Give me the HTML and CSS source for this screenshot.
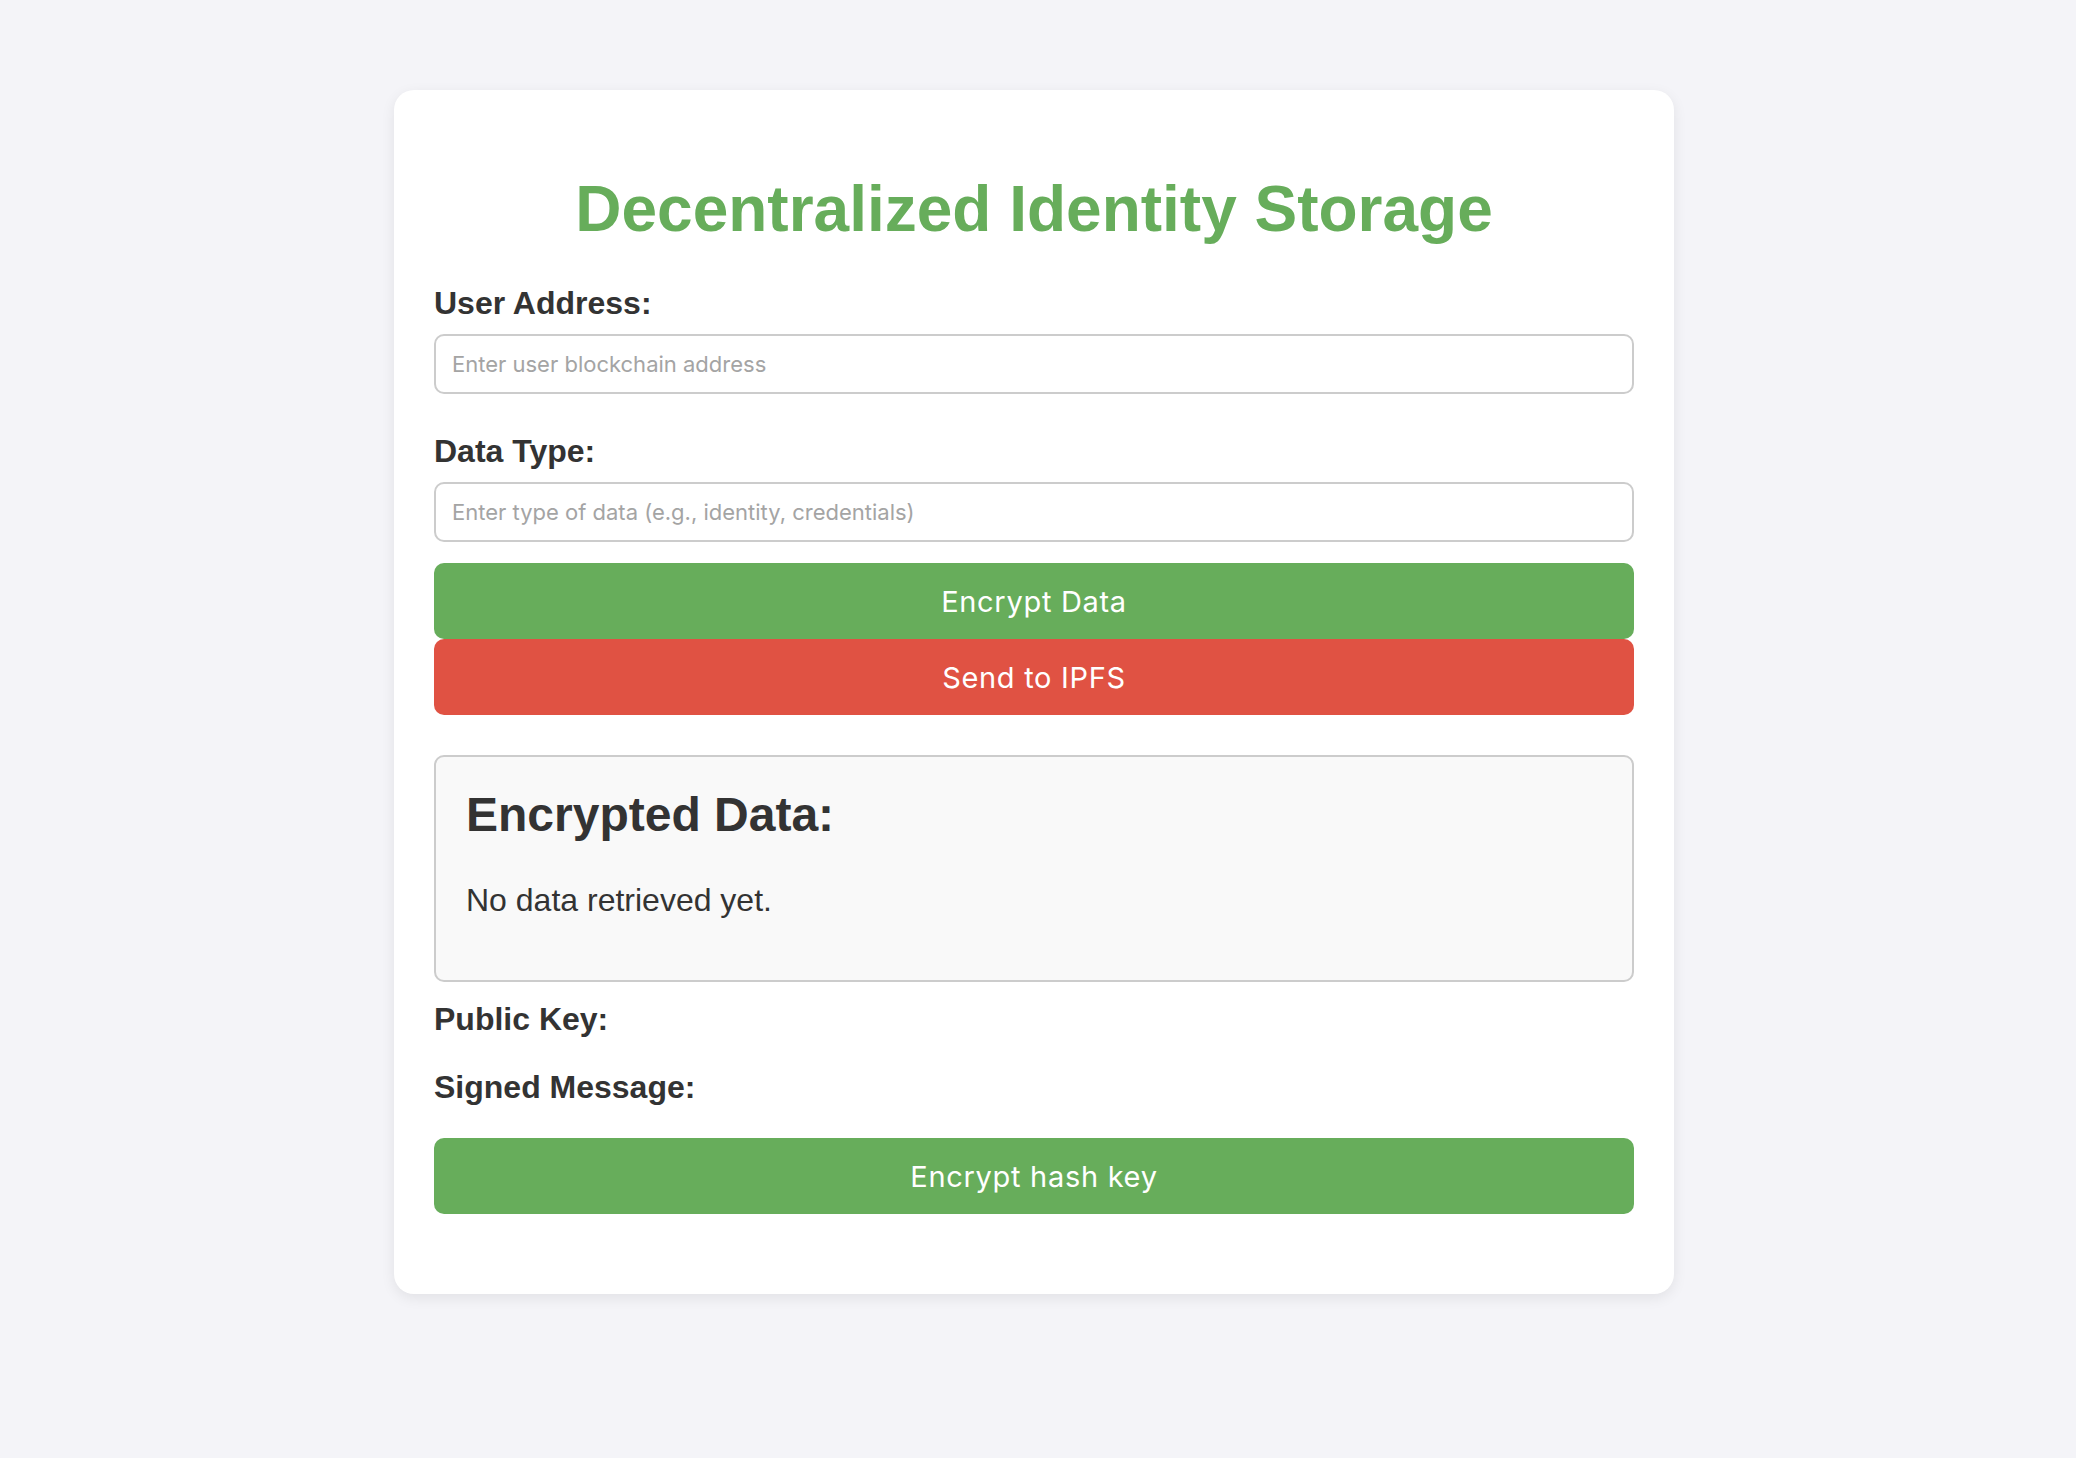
FILE: index.html
```html
<!DOCTYPE html>
<html lang="en">
<head>
<meta charset="utf-8">
<title>Decentralized Identity Storage</title>
<link rel="stylesheet" href="styles.css">
</head>
<body>
  <div class="card">
    <h1 class="title">Decentralized Identity Storage</h1>

    <div class="field">
      <label class="label" for="addr">User Address:</label>
      <input class="input" id="addr" type="text" placeholder="Enter user blockchain address">
    </div>

    <div class="field field-last">
      <label class="label" for="type">Data Type:</label>
      <input class="input" id="type" type="text" placeholder="Enter type of data (e.g., identity, credentials)">
    </div>

    <button class="btn btn-green btn-first">Encrypt Data</button>
    <button class="btn btn-red">Send to IPFS</button>

    <div class="result">
      <h2 class="result-title">Encrypted Data:</h2>
      <p class="result-text">No data retrieved yet.</p>
    </div>

    <div class="info info-public">Public Key:</div>
    <div class="info info-signed">Signed Message:</div>

    <button class="btn btn-green">Encrypt hash key</button>
  </div>
</body>
</html>
```

FILE: styles.css
```css
* {
  box-sizing: border-box;
}

body {
  margin: 0;
  padding: 90px 8px 120px 0;
  background: #f4f4f8;
  font-family: "Liberation Sans", Arial, Helvetica, sans-serif;
  color: #333333;
}

.card {
  width: 1280px;
  margin: 0 auto;
  background: #ffffff;
  border-radius: 20px;
  padding: 40px 40px 80px;
  box-shadow: 0 4px 14px rgba(0, 0, 0, 0.08);
}

.title {
  margin: 42px 0 39px;
  font-size: 64px;
  line-height: 74px;
  font-weight: bold;
  color: #67ad5b;
  text-align: center;
}

.field {
  margin-bottom: 39px;
}

.field-last {
  margin-bottom: 21px;
}

.label {
  display: block;
  font-size: 32px;
  line-height: 37px;
  font-weight: bold;
  margin-bottom: 12px;
}

.input {
  display: block;
  width: 100%;
  height: 60px;
  margin: 0;
  padding: 0 16px;
  border: 2px solid #cccccc;
  border-radius: 10px;
  background: #ffffff;
  font-family: Inter, "Noto Sans", sans-serif;
  font-size: 22px;
  color: #333333;
  outline: none;
}

.input::placeholder {
  color: #a4a4a4;
}

.btn {
  display: block;
  width: 100%;
  height: 76px;
  margin: 0;
  padding: 0;
  border: none;
  border-radius: 10px;
  font-family: Inter, "Noto Sans", sans-serif;
  font-size: 29px;
  letter-spacing: 0.7px;
  color: #ffffff;
  text-align: center;
  cursor: pointer;
}

.btn-green {
  background: #67ad5b;
}

.btn-red {
  background: #e05243;
}

.result {
  margin-top: 40px;
  margin-bottom: 19px;
  border: 2px solid #cccccc;
  border-radius: 10px;
  background: #f9f9f9;
  padding: 30px;
}

.result-title {
  margin: 0 0 40px;
  font-size: 48px;
  line-height: 55px;
  font-weight: bold;
}

.result-text {
  margin: 0 0 31px;
  font-size: 32px;
  line-height: 37px;
}

.info {
  font-size: 32px;
  line-height: 37px;
  font-weight: bold;
}

.info-public {
  margin-bottom: 31px;
}

.info-signed {
  margin-bottom: 32px;
}
```
